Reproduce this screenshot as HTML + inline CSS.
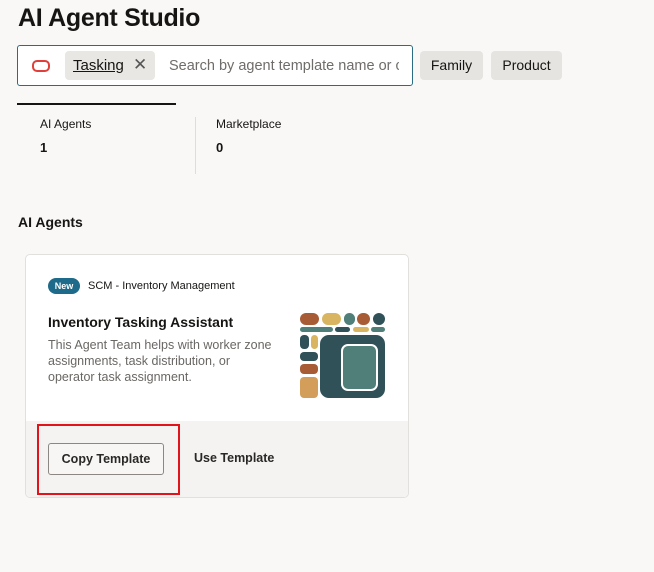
<!DOCTYPE html>
<html><head><style>
body{margin:0;width:654px;height:572px;background:#f9f8f6;font-family:"Liberation Sans",sans-serif;color:#161513;position:relative;overflow:hidden}
.a{position:absolute}
</style></head><body>
<div class="a" style="left:18px;top:4px;font-size:25px;font-weight:bold;letter-spacing:-0.3px">AI Agent Studio</div>
<div class="a" style="left:17px;top:45px;width:394px;height:39px;border:1px solid #2a6d82;border-radius:3px;background:#fff"></div>
<div class="a" style="left:32px;top:60px;width:14px;height:8px;border:2px solid #e0403a;border-radius:5px"></div>
<div class="a" style="left:65px;top:51px;width:90px;height:29px;background:#e9e7e4;border-radius:4px"></div>
<div class="a" style="left:73px;top:57px;font-size:15px;text-decoration:underline">Tasking</div>
<div class="a" style="left:133px;top:55px;font-size:17px;color:#555">✕</div>
<div class="a" style="left:169px;top:58px;font-size:14.5px;color:#6f6c69;width:230px;overflow:hidden;white-space:nowrap">Search by agent template name or c</div>
<div class="a" style="left:420px;top:51px;width:63px;height:29px;background:#e6e4e1;border-radius:4px;font-size:14px;line-height:29px;text-align:center">Family</div>
<div class="a" style="left:491px;top:51px;width:71px;height:29px;background:#e6e4e1;border-radius:4px;font-size:14px;line-height:29px;text-align:center">Product</div>
<div class="a" style="left:17px;top:103px;width:159px;height:2px;background:#161513"></div>
<div class="a" style="left:40px;top:117px;font-size:12px">AI Agents</div>
<div class="a" style="left:40px;top:140px;font-size:13px;font-weight:bold">1</div>
<div class="a" style="left:195px;top:117px;width:1px;height:57px;background:#ddd"></div>
<div class="a" style="left:216px;top:117px;font-size:12px">Marketplace</div>
<div class="a" style="left:216px;top:140px;font-size:13px;font-weight:bold">0</div>
<div class="a" style="left:18px;top:214px;font-size:14px;font-weight:bold">AI Agents</div>
<div class="a" style="left:25px;top:254px;width:382px;height:242px;border:1px solid #e2e0dd;border-radius:5px;background:#fff;overflow:hidden">
 <div class="a" style="left:0;top:166px;width:382px;height:76px;background:#f4f3f1"></div>
</div>
<div class="a" style="left:48px;top:278px;width:32px;height:16px;background:#1d6a8a;border-radius:8px;color:#fff;font-size:9px;font-weight:bold;line-height:16px;text-align:center">New</div>
<div class="a" style="left:88px;top:280px;font-size:11px">SCM - Inventory Management</div>
<div class="a" style="left:48px;top:314px;font-size:14px;font-weight:bold">Inventory Tasking Assistant</div>
<div class="a" style="left:48px;top:337px;font-size:12.5px;color:#6a6764;line-height:16px">This Agent Team helps with worker zone<br>assignments, task distribution, or<br>operator task assignment.</div>
<svg class="a" style="left:0;top:0" width="654" height="572">
<g>
<rect x="300" y="313" width="19" height="12" rx="6" fill="#a85c36"/>
<rect x="322" y="313" width="19" height="12" rx="6" fill="#d9b562"/>
<rect x="344" y="313" width="11" height="12" rx="5.5" fill="#4f7f78"/>
<rect x="357" y="313" width="13" height="12" rx="6" fill="#a85c36"/>
<rect x="373" y="313" width="12" height="12" rx="6" fill="#2f5157"/>
<rect x="300" y="327" width="33" height="5" rx="2.5" fill="#4f7f78"/>
<rect x="335" y="327" width="15" height="5" rx="2.5" fill="#2f5157"/>
<rect x="353" y="327" width="16" height="5" rx="2.5" fill="#d9b562"/>
<rect x="371" y="327" width="14" height="5" rx="2.5" fill="#4f7f78"/>
<rect x="300" y="335" width="9" height="14" rx="4" fill="#2f5157"/>
<rect x="311" y="335" width="7" height="14" rx="3.5" fill="#d9b562"/>
<rect x="300" y="352" width="18" height="9" rx="4" fill="#2f5157"/>
<rect x="300" y="364" width="18" height="10" rx="4" fill="#a85c36"/>
<rect x="300" y="377" width="18" height="21" rx="4" fill="#d39d5a"/>
<rect x="320" y="335" width="65" height="63" rx="9" fill="#2f5157"/>
<rect x="342" y="345" width="35" height="45" rx="6" fill="#4f7f78" stroke="#fff" stroke-width="2"/>
</g>
</svg>
<div class="a" style="left:37px;top:424px;width:139px;height:67px;border:2px solid #e1141b"></div>
<div class="a" style="left:48px;top:443px;width:114px;height:30px;border:1px solid #8a8784;border-radius:3px;background:#f7f6f4;font-size:12.5px;line-height:30px;text-align:center;font-weight:bold;color:#2a2826">Copy Template</div>
<div class="a" style="left:194px;top:451px;font-size:12.5px;font-weight:bold;color:#2a2826">Use Template</div>
</body></html>
